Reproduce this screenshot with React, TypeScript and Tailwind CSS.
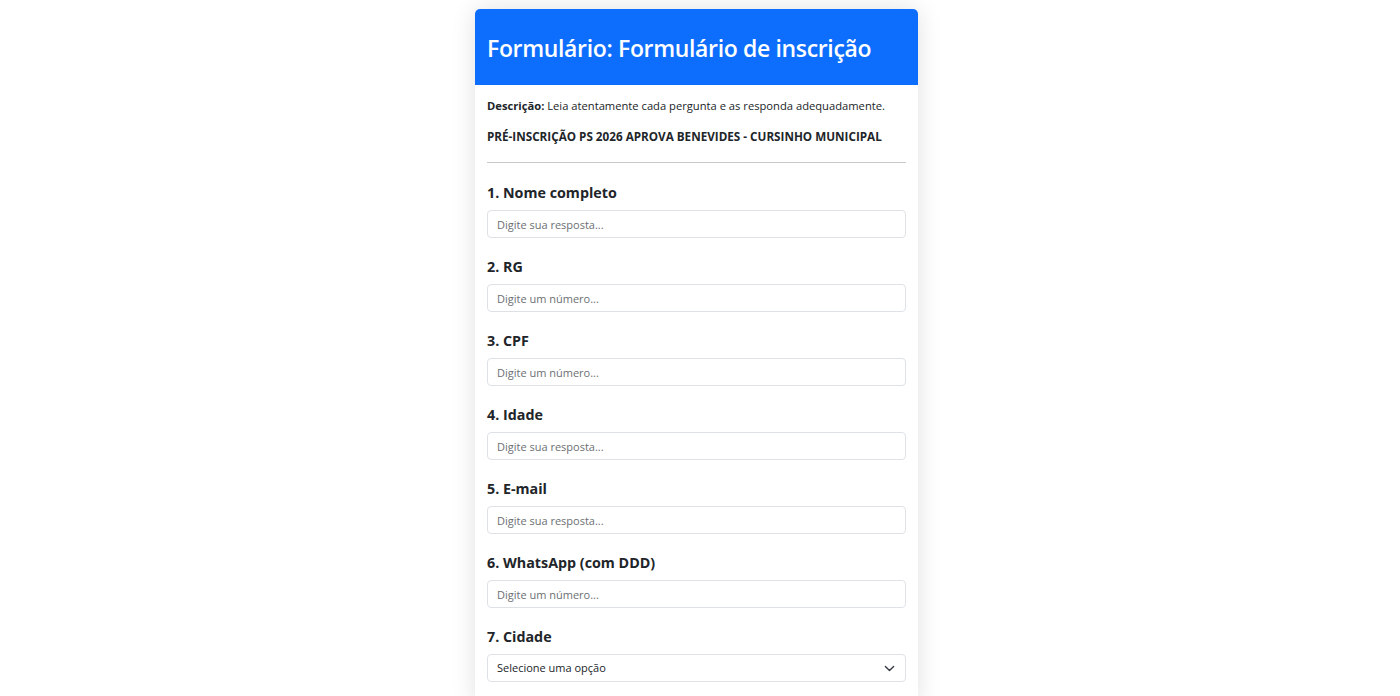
import React from 'react';

const questions = [
  { label: '1. Nome completo', placeholder: 'Digite sua resposta...' },
  { label: '2. RG', placeholder: 'Digite um número...' },
  { label: '3. CPF', placeholder: 'Digite um número...' },
  { label: '4. Idade', placeholder: 'Digite sua resposta...' },
  { label: '5. E-mail', placeholder: 'Digite sua resposta...' },
  { label: '6. WhatsApp (com DDD)', placeholder: 'Digite um número...' },
];

function Chevron() {
  return (
    <svg width="11" height="11" viewBox="0 0 16 16" fill="none" className="shrink-0">
      <path d="m2 5 6 6 6-6" stroke="#343a40" strokeWidth="2" strokeLinecap="round" strokeLinejoin="round" />
    </svg>
  );
}

export default function App() {
  return (
    <div
      className="min-h-screen bg-white flex justify-center pr-[7px] text-[#212529]"
      style={{ fontFamily: '"Open Sans", "Noto Sans", Arial, sans-serif' }}
    >
      <div className="mt-[9px] w-[443px] self-start bg-white rounded-[5px] shadow-[0_0_24px_rgba(0,0,0,0.12)] overflow-hidden">
        {/* Header */}
        <div className="h-[76px] bg-[#0d6efd] flex items-center px-3">
          <h1 className="text-white text-[23px] leading-none font-semibold tracking-[-0.35px] pt-[2px]">
            Formulário: Formulário de inscrição
          </h1>
        </div>

        {/* Body */}
        <div className="px-3 pt-[11px] pb-6">
          <p className="text-[11.2px] leading-5 whitespace-nowrap">
            <span className="font-bold">Descrição:</span> Leia atentamente cada pergunta e as responda adequadamente.
          </p>
          <p className="mt-[10px] text-[11.7px] leading-5 font-bold whitespace-nowrap">
            PRÉ-INSCRIÇÃO PS 2026 APROVA BENEVIDES - CURSINHO MUNICIPAL
          </p>
          <hr className="mt-4 border-0 h-px bg-[#c8c8c8]" />

          <div className="mt-[18px] flex flex-col gap-[17px]">
            {questions.map((q) => (
              <div key={q.label} className="flex flex-col gap-[5px]">
                <label className="text-[14.3px] leading-6 font-bold">{q.label}</label>
                <input
                  className="h-7 w-full rounded-[4px] border border-[#dee2e6] px-[9px] text-[11px] placeholder:text-[#6c6f73] outline-none"
                  placeholder={q.placeholder}
                />
              </div>
            ))}
            <div className="flex flex-col gap-[5px]">
              <label className="text-[14.3px] leading-6 font-bold">7. Cidade</label>
              <div className="h-7 w-full rounded-[4px] border border-[#dee2e6] pl-[9px] pr-[10px] flex items-center justify-between text-[11px]">
                <span>Selecione uma opção</span>
                <Chevron />
              </div>
            </div>
          </div>
        </div>
      </div>
    </div>
  );
}
